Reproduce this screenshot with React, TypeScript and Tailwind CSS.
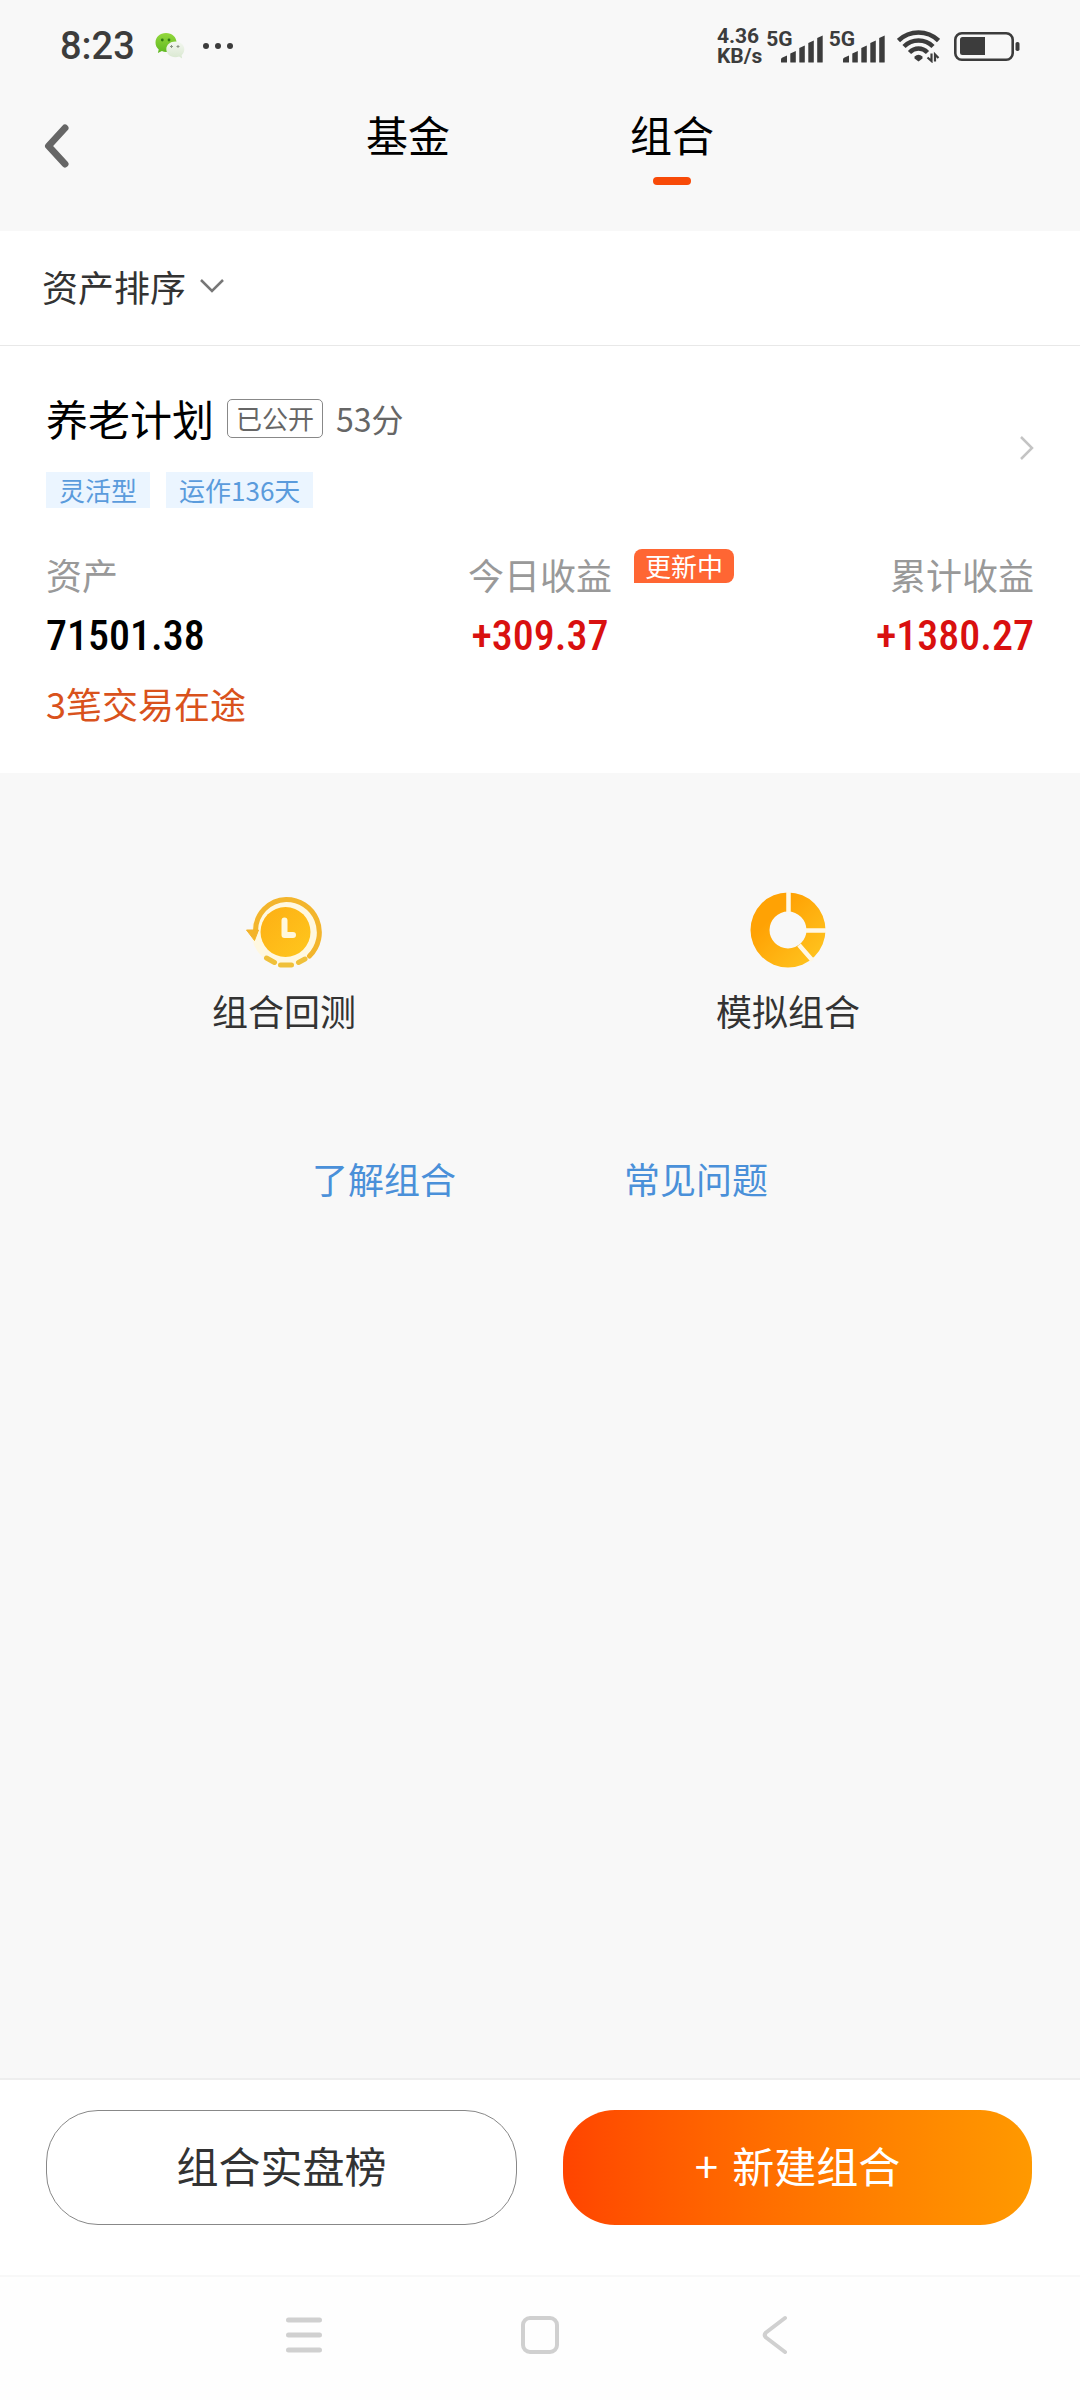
import { useState } from "react"
import { clsx } from "clsx"

const tabs = ["基金", "组合"]

const holding = {
  name: "养老计划",
  status: "已公开",
  score: "53分",
  tags: ["灵活型", "运作136天"],
  asset: "71501.38",
  today: "+309.37",
  total: "+1380.27",
  pending: "3笔交易在途",
}

function WechatIcon() {
  return (
    <svg width="30" height="28" viewBox="0 0 30 28" aria-hidden="true">
      <defs>
        <linearGradient id="wechat-green" x1="0" y1="0" x2="0" y2="1">
          <stop offset="0" stopColor="#93d83c" />
          <stop offset="1" stopColor="#5fb822" />
        </linearGradient>
        <linearGradient id="wechat-pale" x1="0" y1="0" x2="0" y2="1">
          <stop offset="0" stopColor="#f3f7f0" />
          <stop offset="1" stopColor="#d9e8d0" />
        </linearGradient>
      </defs>
      <path d="M11 1C5 1 0.500 5 0.500 10.500c0 3 1.200 5.300 3.200 7l-0.800 3.500 4-2C8.200 19.600 9.500 20 11 20c6 0 10.500-4 10.500-9.500S17 1 11 1z" fill="url(#wechat-green)" />
      <circle cx="7.300" cy="8" r="1.400" fill="#2f7a12" />
      <circle cx="14" cy="8" r="1.400" fill="#2f7a12" />
      <path d="M20.300 9.500c-5 0-9 3.300-9 7.700s4 8 9 8c1.500 0 2.800-0.300 3.800-0.700l3 2-0.500-3.300c1.700-1.500 2.700-3.600 2.700-6 0-4.400-4-7.700-9-7.700z" fill="url(#wechat-pale)" />
      <path d="M15 14.500h3M16.500 13v3M21.500 14.500h3M23 13v3" stroke="#8a9484" strokeWidth="1" />
    </svg>
  )
}

function Signal() {
  return (
    <div className="flex items-start">
      <span className="text-[21px] leading-[20px] font-bold">5G</span>
      <svg width="42" height="28" viewBox="0 0 42 28" fill="#3c3c3c" className="mt-[6px] -ml-3" aria-hidden="true">
        <path d="M0 27v-2.500q0-1.500 1.500-2l4.500-2V27q0 .5-.5.5H.5Q0 27.500 0 27z" />
        <path d="M9.300 27V18.500l5.500-2.500V27q0 .5-.5.5h-4.500q-.5 0-.5-.5z" />
        <path d="M18.300 27V13l5.500-2.500V27q0 .5-.5.5h-4.500q-.5 0-.5-.5z" />
        <path d="M27.300 27V8l5.500-2.500V27q0 .5-.5.5h-4.500q-.5 0-.5-.5z" />
        <path d="M36.200 27V3l5.500-2.500V27q0 .5-.5.5h-4.500q-.5 0-.5-.5z" />
      </svg>
    </div>
  )
}

function WifiIcon() {
  return (
    <svg width="43" height="34" viewBox="0 0 43 34" fill="none" stroke="#3c3c3c" aria-hidden="true">
      <path d="M1.500 11.500Q10 3.500 21.500 3.500t20 8" strokeWidth="4.500" />
      <path d="M7 17.500Q13 11.500 21.500 11.500T36 17.500" strokeWidth="4.500" />
      <path d="M12.500 23.500q4-4 9-4t9 4" strokeWidth="4.500" />
      <path d="M17.500 27.500q4-3.500 8 0v2l-4 3-4-3z" fill="#3c3c3c" stroke="none" />
      <path d="M34.500 24.500V32l-4-3.500M38 32.500V25.500l3.500 3.500" strokeWidth="2.200" />
    </svg>
  )
}

function BatteryIcon() {
  return (
    <svg width="66" height="29" viewBox="0 0 66 29" aria-hidden="true">
      <rect x="1.300" y="1.300" width="57.400" height="26.400" rx="6.500" fill="none" stroke="#3c3c3c" strokeWidth="2.600" />
      <path d="M6 7.500Q6 5 8.500 5H31v18H8.500Q6 23 6 20.500z" fill="#3c3c3c" />
      <rect x="61.500" y="10" width="4" height="9" rx="1.800" fill="#3c3c3c" />
    </svg>
  )
}

function BacktestIcon() {
  return (
    <svg width="76" height="76" viewBox="0 0 76 76" fill="none" aria-hidden="true">
      <defs>
        <linearGradient id="backtest" x1="0" y1="0" x2="1" y2="1">
          <stop offset="0" stopColor="#fdaf14" />
          <stop offset="1" stopColor="#ffc71d" />
        </linearGradient>
      </defs>
      <circle cx="39.500" cy="40" r="34" fill="#fff8e0" />
      <path d="M9.500 39A31.500 31.500 0 0 1 40 7.500 33 33 0 0 1 63.500 64" stroke="#f3b52c" strokeWidth="5" strokeLinecap="round" />
      <path d="M0.500 38h12l-4 10.500z" fill="#f3b32a" stroke="#f3b32a" strokeLinejoin="round" />
      <path d="M20.500 66l8 4.500M34.500 73h11M52.500 70.500l6.500-3.500" stroke="#f0c03a" strokeWidth="5" strokeLinecap="round" />
      <circle cx="39.500" cy="40" r="25" fill="url(#backtest)" />
      <path d="M38.500 28.500V43H47" stroke="#fff8dc" strokeWidth="6" strokeLinecap="round" strokeLinejoin="round" />
    </svg>
  )
}

function SimulateIcon() {
  return (
    <svg width="76" height="76" viewBox="0 0 76 76" fill="none" aria-hidden="true">
      <defs>
        <linearGradient id="simulate" x1="0" y1="0" x2="1" y2="1">
          <stop offset="0.300" stopColor="#ffa204" />
          <stop offset="1" stopColor="#ffc923" />
        </linearGradient>
      </defs>
      <path fillRule="evenodd" d="M38 0.500a37.500 37.500 0 1 1 0 75 37.500 37.500 0 0 1 0-75zM38 19.500a18.500 18.500 0 1 0 0 37 18.500 18.500 0 0 0 0-37z" fill="url(#simulate)" />
      <path d="M38.500 0v20M56 38.500h20M49 53l13.500 15.500" stroke="#fff8e6" strokeWidth="4.500" />
    </svg>
  )
}

function Stat({ label, value, className }: { label: string; value: string; className?: string }) {
  return (
    <div className={className}>
      <div className="text-[36px] leading-[48px] text-[#999999]">{label}</div>
      <div
        className={clsx(
          "mt-3 font-['Roboto_Condensed',Roboto,sans-serif] text-[42px] leading-[52px] font-medium",
          value.startsWith("+") ? "text-[#d9100f]" : "text-black"
        )}
      >
        {value}
      </div>
    </div>
  )
}

export default function App() {
  const [active, setActive] = useState("组合")

  return (
    <div className="flex min-h-screen flex-col bg-[#f8f8f8] font-['Noto_Sans_CJK_SC',sans-serif] text-[#333333]">
      {/* Status bar */}
      <div className="flex h-[92px] items-center justify-between px-[60px] font-[Roboto,sans-serif] text-[#3c3c3c]">
        <div className="flex items-center">
          <span className="text-[38px] leading-[44px] font-medium">8:23</span>
          <div className="ml-5 flex items-center gap-[18px]">
            <WechatIcon />
            <svg width="30" height="6" viewBox="0 0 30 6" fill="#3c3c3c" aria-hidden="true">
              <circle cx="3" cy="3" r="3" />
              <circle cx="15" cy="3" r="3" />
              <circle cx="27" cy="3" r="3" />
            </svg>
          </div>
        </div>
        <div className="flex items-center">
          <div className="text-[21px] leading-[20px] font-bold">
            <div>4.36</div>
            <div>KB/s</div>
          </div>
          <div className="ml-1 flex gap-[6px]">
            <Signal />
            <Signal />
          </div>
          <div className="ml-3 flex items-center gap-[14px]">
            <WifiIcon />
            <BatteryIcon />
          </div>
        </div>
      </div>

      {/* Header */}
      <header className="grid h-[139px] grid-cols-[1fr_auto_1fr] items-start">
        <button className="mt-8 ml-[43px] w-fit" aria-label="返回">
          <svg width="28" height="44" viewBox="0 0 28 44" fill="none" stroke="#666666" strokeWidth="7" strokeLinecap="round" strokeLinejoin="round">
            <path d="M22 4L5.500 22 22 40" />
          </svg>
        </button>
        <nav className="mt-3 flex gap-[180px]">
          {tabs.map((tab) => (
            <button key={tab} onClick={() => setActive(tab)} className="flex flex-col items-center text-[42px] leading-[60px] text-black">
              {tab}
              {tab === active && <span className="mt-[13px] h-2 w-[38px] rounded-full bg-[#f84a08]" />}
            </button>
          ))}
        </nav>
      </header>

      {/* Sort */}
      <div className="flex h-[115px] items-center border-b border-[#e8e8e8] bg-white px-[42px] pb-1">
        <button className="flex items-center gap-[14px] text-[36px] leading-[48px]">
          资产排序
          <svg width="24" height="14" viewBox="0 0 24 14" fill="none" stroke="#777777" strokeWidth="2.500">
            <path d="M1 1l11 11L23 1" />
          </svg>
        </button>
      </div>

      {/* Holding */}
      <section className="bg-white px-[46px] pt-[42px] pb-[46px]">
        <div className="flex items-center justify-between">
          <div>
            <div className="flex items-center">
              <h2 className="text-[42px] leading-[60px] text-black">{holding.name}</h2>
              <span className="ml-[13px] flex h-[39px] items-center rounded-[5px] border border-[#888888] px-2 text-[26px] leading-[36px] text-[#666666]">
                {holding.status}
              </span>
              <span className="ml-[13px] text-[32px] leading-[40px] text-[#666666]">{holding.score}</span>
            </div>
            <div className="mt-6 flex gap-4">
              {holding.tags.map((tag) => (
                <span key={tag} className="bg-[#ebf5ff] px-[13px] text-[26px] leading-[36px] text-[#5a9bdc]">
                  {tag}
                </span>
              ))}
            </div>
          </div>
          <a href="#detail" aria-label={holding.name}>
            <svg width="14" height="24" viewBox="0 0 14 24" fill="none" stroke="#c4c4c4" strokeWidth="2.500">
              <path d="M1 1l11 11L1 23" />
            </svg>
          </a>
        </div>

        <div className="mt-[42px] flex justify-between">
          <Stat label="资产" value={holding.asset} className="flex-1" />
          <div className="relative">
            <Stat label="今日收益" value={holding.today} className="text-center" />
            <span className="absolute -top-px left-full ml-[22px] rounded-lg rounded-bl-none bg-[#ff6633] px-[11px] text-[26px] leading-[34px] whitespace-nowrap text-white">
              更新中
            </span>
          </div>
          <Stat label="累计收益" value={holding.total} className="flex-1 text-right" />
        </div>

        <a href="#pending" className="mt-[17px] block text-[36px] leading-[48px] text-[#d9521c]">
          {holding.pending}
        </a>
      </section>

      {/* Tools */}
      <main className="flex-1">
        <div className="grid grid-cols-2 pt-[119px] pr-10 pl-8 text-[36px] leading-[48px]">
          <button className="flex flex-col items-center gap-[18px]">
            <BacktestIcon />
            组合回测
          </button>
          <button className="flex flex-col items-center gap-[18px]">
            <SimulateIcon />
            模拟组合
          </button>
        </div>
        <div className="mt-[120px] flex justify-center gap-[168px] text-[36px] leading-[48px] text-[#4a90d9]">
          <a href="#about">了解组合</a>
          <a href="#faq">常见问题</a>
        </div>
      </main>

      {/* Actions */}
      <footer className="flex gap-[46px] border-t-2 border-[#eeeeee] bg-white pt-[30px] pr-12 pb-[50px] pl-[46px] text-[42px]">
        <button className="h-[115px] flex-1 rounded-[52px] border border-[#888888] pb-[6px]">组合实盘榜</button>
        <button className="flex h-[115px] flex-1 items-center justify-center gap-[14px] rounded-[52px] bg-linear-to-r from-[#ff4400] to-[#ff9900] pb-[6px] text-white">
          <span>+</span>
          <span>新建组合</span>
        </button>
      </footer>

      {/* System navigation */}
      <div className="flex h-[125px] items-center justify-center gap-[196px] border-t-2 border-[#f8f8f8] bg-[#fefefe] pb-2">
        <button aria-label="最近任务">
          <svg width="40" height="40" viewBox="0 0 40 40" stroke="#d0d0d0" strokeWidth="5" strokeLinecap="round">
            <path d="M4.500 5h31M4.500 20h31M4.500 35h31" />
          </svg>
        </button>
        <button aria-label="主屏幕">
          <svg width="40" height="40" viewBox="0 0 40 40" fill="none" stroke="#d0d0d0" strokeWidth="4">
            <rect x="3" y="3" width="34" height="34" rx="7" />
          </svg>
        </button>
        <button aria-label="返回上一页">
          <svg width="40" height="40" viewBox="0 0 40 40" fill="none" stroke="#d0d0d0" strokeWidth="4" strokeLinecap="round" strokeLinejoin="round">
            <path d="M29 3L10 17.500q-2.500 2.500 0 5L29 37" />
          </svg>
        </button>
      </div>
    </div>
  )
}
